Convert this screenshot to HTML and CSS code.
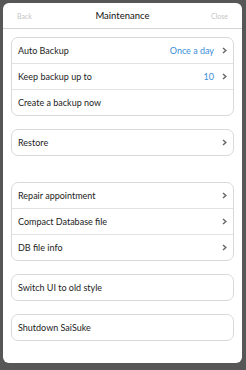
FILE: index.html
```html
<!DOCTYPE html>
<html lang="en">
<head>
    <meta charset="UTF-8">
    <meta name="viewport" content="width=device-width, initial-scale=1.0">
    <title>Maintenance</title>
    <link rel="stylesheet" href="styles.css">
</head>
<body>

<div id="modal">
    <!-- Title bar -->
    <div class="header">
        <span class="nav-btn">Back</span>
        <span class="title">Maintenance</span>
        <span class="nav-btn right">Close</span>
    </div>

    <div class="content">
        <div class="group">
            <div class="row">
                <span class="label">Auto Backup</span>
                <span class="value">Once a day</span>
                <svg class="chevron" viewBox="0 0 5 7"><polyline points="1,1 3.8,3.5 1,6"/></svg>
            </div>
            <div class="row">
                <span class="label">Keep backup up to</span>
                <span class="value">10</span>
                <svg class="chevron" viewBox="0 0 5 7"><polyline points="1,1 3.8,3.5 1,6"/></svg>
            </div>
            <div class="row">
                <span class="label">Create a backup now</span>
            </div>
        </div>

        <div class="group">
            <div class="row">
                <span class="label">Restore</span>
                <svg class="chevron" viewBox="0 0 5 7"><polyline points="1,1 3.8,3.5 1,6"/></svg>
            </div>
        </div>

        <div class="group spaced">
            <div class="row">
                <span class="label">Repair appointment</span>
                <svg class="chevron" viewBox="0 0 5 7"><polyline points="1,1 3.8,3.5 1,6"/></svg>
            </div>
            <div class="row">
                <span class="label">Compact Database file</span>
                <svg class="chevron" viewBox="0 0 5 7"><polyline points="1,1 3.8,3.5 1,6"/></svg>
            </div>
            <div class="row">
                <span class="label">DB file info</span>
                <svg class="chevron" viewBox="0 0 5 7"><polyline points="1,1 3.8,3.5 1,6"/></svg>
            </div>
        </div>

        <div class="group">
            <div class="row">
                <span class="label">Switch UI to old style</span>
            </div>
        </div>

        <div class="group">
            <div class="row">
                <span class="label">Shutdown SaiSuke</span>
            </div>
        </div>
    </div>
</div>

</body>
</html>
```

FILE: styles.css
```css
body {
    font-family: Lato, "Noto Sans", sans-serif;
    margin: 0;
    padding: 3px 4px 7px 3px;
    background-color: #575757;
    color: #1c1c1c;
}
#modal {
    width: 239px;
    height: 360px;
    background-color: #fff;
    border-radius: 6px;
    overflow: hidden;
}
.header {
    height: 25px;
    border-bottom: 1px solid #d4d4d4;
    display: grid;
    grid-template-columns: 1fr auto 1fr;
    align-items: center;
    padding: 0 14px;
}
.title {
    font-size: 9.5px;
    color: #111;
}
.nav-btn {
    font-size: 7px;
    color: #c4c4c4;
}
.nav-btn.right {
    text-align: right;
}
.content {
    padding: 8px 8px 0 8px;
}
.group {
    border: 1px solid #d9d9d9;
    border-radius: 7px;
    margin-bottom: 13px;
}
.group.spaced {
    margin-top: 26px;
}
.row {
    height: 25px;
    display: flex;
    align-items: center;
    padding: 0 6px 0 6px;
    font-size: 9px;
}
.row + .row {
    border-top: 1px solid #e2e2e2;
}
.label {
    flex: 1;
}
.value {
    color: #3b8ed8;
    margin-right: 8px;
}
.chevron {
    width: 5px;
    height: 7px;
    fill: none;
    stroke: #686868;
    stroke-width: 1.5;
}
```
